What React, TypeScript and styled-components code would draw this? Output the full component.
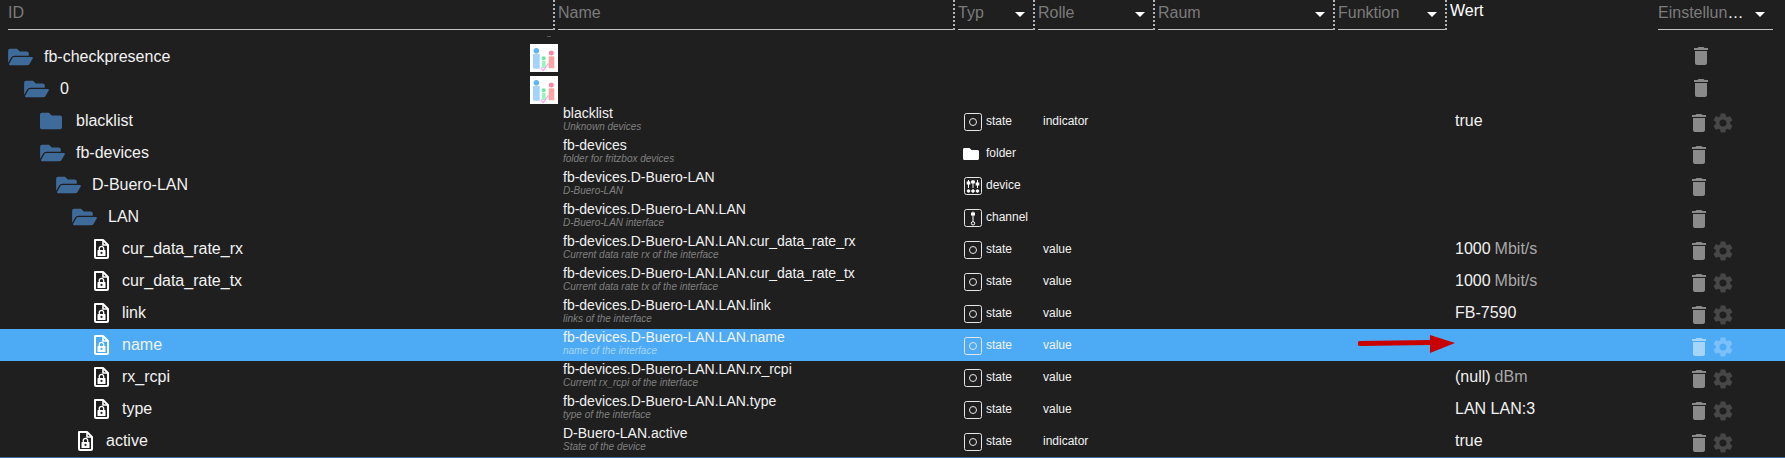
import React from "react";
import styled, { createGlobalStyle } from "styled-components";
import { FaFolder, FaFolderOpen } from "react-icons/fa";

const BG = "#1f1f1f";
const COLS = "555px 400px 80px 120px 180px 112px 208px 130px";

const Global = createGlobalStyle`
  html, body { margin: 0; padding: 0; background: ${BG}; overflow: hidden; }
  body { font-family: "Liberation Sans", Arial, sans-serif; color: #fff; }
`;

const Page = styled.div`
  position: relative;
  width: 1785px;
  height: 458px;
  overflow: hidden;
  background: ${BG};
`;

const HeaderRow = styled.div`
  display: grid;
  grid-template-columns: ${COLS};
  height: 41px;
`;

const HeaderCell = styled.div<{ $first?: boolean; $last?: boolean; $bare?: boolean }>`
  position: relative;
  box-sizing: border-box;
  height: 30px;
  padding-left: ${(p) => (p.$first ? 8 : 3)}px;
  padding-right: ${(p) => (p.$last ? 12 : 0)}px;
  border-right: ${(p) => (p.$last || p.$bare ? "0" : "2px dotted #b4b4b4")};
`;

const Grip = styled.span`
  position: absolute;
  right: 2px;
  top: 36px;
  width: 4px;
  height: 1px;
  background: #555;
`;

const Field = styled.div`
  box-sizing: border-box;
  display: flex;
  align-items: center;
  justify-content: space-between;
  height: 30px;
  padding: 0 8px 3px 0;
  border-bottom: 1px solid #c4c4c4;
  font-size: 16px;
  color: #7b7b7b;
`;

const Caret = styled.span`
  flex: none;
  width: 0;
  height: 0;
  margin-top: 3px;
  border-left: 5px solid transparent;
  border-right: 5px solid transparent;
  border-top: 5px solid #fff;
`;

const Ellipsis = styled.span`
  color: #fff;
`;

const WertLabel = styled.div`
  font-size: 16px;
  line-height: 21px;
  color: #fff;
`;

const TreeRow = styled.div<{ $selected?: boolean }>`
  display: grid;
  grid-template-columns: ${COLS};
  height: 32px;
  background: ${(p) => (p.$selected ? "#4dabf5" : "transparent")};
  color: #f2f2f2;
`;

const IdCell = styled.div<{ $level: number }>`
  display: flex;
  align-items: center;
  padding-left: ${(p) => 8 + p.$level * 16}px;
  font-size: 16px;
`;

const Slot = styled.span<{ $file?: boolean }>`
  flex: none;
  display: flex;
  align-items: center;
  box-sizing: border-box;
  width: ${(p) => (p.$file ? 34 : 36)}px;
  padding-left: ${(p) => (p.$file ? 6 : 0)}px;
`;

const OpenFolder = styled(FaFolderOpen)`
  width: 25px;
  height: 22px;
  color: #3f6b9b;
`;

const ClosedFolder = styled(FaFolder)`
  width: 22px;
  height: 22px;
  color: #3f6b9b;
`;

const Logo = styled.svg`
  flex: none;
  width: 28px;
  height: 28px;
  margin: 2px -3px 0 auto;
  background: #fff;
`;

const NameCell = styled.div`
  padding-left: 8px;
`;

const NameText = styled.div`
  font-size: 14px;
  line-height: 16px;
  white-space: nowrap;
`;

const NameSub = styled.div<{ $selected?: boolean }>`
  font-size: 10px;
  line-height: 11px;
  font-style: italic;
  white-space: nowrap;
  color: ${(p) => (p.$selected ? "#a6d5fa" : "#808080")};
`;

const TypeCell = styled.div`
  display: flex;
  align-items: center;
  padding-left: 9px;
  font-size: 12px;
`;

const TypeIcon = styled.svg`
  flex: none;
  width: 18px;
  height: 18px;
  margin: 2px 4px 0 0;
`;

const TypeFolder = styled(FaFolder)`
  flex: none;
  width: 16px;
  height: 16px;
  margin: 1px 7px 0 -1px;
  color: #fff;
`;

const RoleCell = styled.div`
  display: flex;
  align-items: center;
  padding: 0 0 1px 8px;
  font-size: 12px;
`;

const ValueCell = styled.div`
  display: flex;
  align-items: center;
  gap: 4px;
  padding: 0 0 1px 8px;
  font-size: 16px;
  grid-column: 7;
`;

const Unit = styled.span`
  color: #a8a8a8;
`;

const ActionCell = styled.div<{ $top?: boolean }>`
  display: flex;
  align-items: center;
  box-sizing: border-box;
  padding-left: ${(p) => (p.$top ? 34 : 32)}px;
  padding-top: ${(p) => (p.$top ? 0 : 4)}px;
  padding-bottom: ${(p) => (p.$top ? 2 : 0)}px;
`;

const ActionIcon = styled.svg<{ $tone: string }>`
  flex: none;
  width: 24px;
  height: 24px;
  fill: ${(p) => p.$tone};
`;

const BottomLine = styled.div`
  height: 1px;
  background: #3f6f9f;
`;

const Arrow = styled.svg`
  position: absolute;
  left: 1358px;
  top: 335px;
  width: 98px;
  height: 18px;
`;

const Spacer = styled.div``;

const AppLogo = () => (
  <Logo viewBox="0 0 28 28">
    <circle cx="6.3" cy="6.7" r="2.8" fill="#64b5f6" />
    <rect x="3" y="10" width="6.7" height="14.7" rx="0.6" fill="#a3d3fb" />
    <circle cx="13.7" cy="14.3" r="2" fill="#69eba0" />
    <rect x="12" y="17" width="3.7" height="7" fill="#98f5bd" />
    <circle cx="21.3" cy="9" r="2.5" fill="#ff86a8" />
    <rect x="18.7" y="12.3" width="5.6" height="12" rx="0.6" fill="#ffa4a4" />
    <path d="M11 23.7l2.3 3 5-7.4" fill="none" stroke="#f9a6f3" strokeWidth="1.2" />
  </Logo>
);

const FileLock = () => (
  <svg width="15" height="20" viewBox="0 0 15 20" style={{ display: "block" }}>
    <path d="M1 1h8l5 5v12a1 1 0 0 1-1 1H2a1 1 0 0 1-1-1Z" fill="none" stroke="#fff" strokeWidth="2" strokeLinejoin="round" />
    <path d="M9 1v5h5" fill="none" stroke="#fff" strokeWidth="1.6" />
    <path d="M5.3 11V9.6a2.2 2.2 0 0 1 4.4 0V11" fill="none" stroke="#fff" strokeWidth="1.3" />
    <path fillRule="evenodd" clipRule="evenodd" d="M4 11h7a.5.5 0 0 1 .5.5v5a.5.5 0 0 1-.5.5H4a.5.5 0 0 1-.5-.5v-5A.5.5 0 0 1 4 11Zm3.5 1.8a1.1 1.1 0 1 0 0 2.2 1.1 1.1 0 0 0 0-2.2Z" fill="#fff" />
  </svg>
);

const TypeGlyph = ({ type }: { type: string }) => {
  if (type === "folder") return <TypeFolder />;
  return (
    <TypeIcon viewBox="0 0 18 18" fill="none" stroke="#e6e6e6">
      <rect x="0.5" y="0.5" width="17" height="17" rx="2" />
      {type === "state" && <circle cx="9" cy="9" r="3.5" />}
      {type === "device" && (
        <g fill="#fff" stroke="#fff">
          <path d="M4.5 3v8M9 3v8M13.5 3v8" fill="none" />
          <rect x="3.2" y="5" width="2.6" height="2" />
          <rect x="7.7" y="4" width="2.6" height="2" />
          <rect x="12.2" y="6" width="2.6" height="2" />
          <circle cx="4.5" cy="14" r="1.3" />
          <circle cx="9" cy="14" r="1.3" />
          <circle cx="13.5" cy="14" r="1.3" />
        </g>
      )}
      {type === "channel" && (
        <g stroke="#fff">
          <path d="M9 2.5v10" />
          <rect x="7.5" y="4" width="3" height="2" fill="#fff" />
          <circle cx="9" cy="14.3" r="1.7" />
        </g>
      )}
    </TypeIcon>
  );
};

const TRASH = "M6 19c0 1.1.9 2 2 2h8c1.1 0 2-.9 2-2V7H6v12zM19 4h-3.5l-1-1h-5l-1 1H5v2h14V4z";
const GEAR =
  "M19.14 12.94c.04-.3.06-.61.06-.94 0-.32-.02-.64-.07-.94l2.03-1.58c.18-.14.23-.41.12-.61l-1.92-3.32c-.12-.22-.37-.29-.59-.22l-2.39.96c-.5-.38-1.03-.7-1.62-.94l-.36-2.54c-.04-.24-.24-.41-.48-.41h-3.84c-.24 0-.43.17-.47.41l-.36 2.54c-.59.24-1.13.57-1.62.94l-2.39-.96c-.22-.08-.47 0-.59.22L2.74 8.87c-.12.21-.08.47.12.61l2.03 1.58c-.05.3-.09.63-.09.94s.02.64.07.94l-2.03 1.58c-.18.14-.23.41-.12.61l1.92 3.32c.12.22.37.29.59.22l2.39-.96c.5.38 1.03.7 1.62.94l.36 2.54c.05.24.24.41.48.41h3.84c.24 0 .44-.17.47-.41l.36-2.54c.59-.24 1.13-.56 1.62-.94l2.39.96c.22.08.47 0 .59-.22l1.92-3.32c.12-.22.07-.47-.12-.61l-2.01-1.58zM12 15.6c-1.98 0-3.6-1.62-3.6-3.6s1.62-3.6 3.6-3.6 3.6 1.62 3.6 3.6-1.62 3.6-3.6 3.6z";

type Row = {
  level: number;
  id: string;
  icon: "open" | "closed" | "file";
  logo?: boolean;
  name?: string;
  sub?: string;
  type?: string;
  role?: string;
  value?: string;
  unit?: string;
  gear?: boolean;
  selected?: boolean;
};

const B = "fb-devices.D-Buero-LAN.LAN";
const rows: Row[] = [
  { level: 0, id: "fb-checkpresence", icon: "open", logo: true },
  { level: 1, id: "0", icon: "open", logo: true },
  { level: 2, id: "blacklist", icon: "closed", name: "blacklist", sub: "Unknown devices", type: "state", role: "indicator", value: "true", gear: true },
  { level: 2, id: "fb-devices", icon: "open", name: "fb-devices", sub: "folder for fritzbox devices", type: "folder" },
  { level: 3, id: "D-Buero-LAN", icon: "open", name: "fb-devices.D-Buero-LAN", sub: "D-Buero-LAN", type: "device" },
  { level: 4, id: "LAN", icon: "open", name: B, sub: "D-Buero-LAN interface", type: "channel" },
  { level: 5, id: "cur_data_rate_rx", icon: "file", name: `${B}.cur_data_rate_rx`, sub: "Current data rate rx of the interface", type: "state", role: "value", value: "1000", unit: "Mbit/s", gear: true },
  { level: 5, id: "cur_data_rate_tx", icon: "file", name: `${B}.cur_data_rate_tx`, sub: "Current data rate tx of the interface", type: "state", role: "value", value: "1000", unit: "Mbit/s", gear: true },
  { level: 5, id: "link", icon: "file", name: `${B}.link`, sub: "links of the interface", type: "state", role: "value", value: "FB-7590", gear: true },
  { level: 5, id: "name", icon: "file", name: `${B}.name`, sub: "name of the interface", type: "state", role: "value", gear: true, selected: true },
  { level: 5, id: "rx_rcpi", icon: "file", name: `${B}.rx_rcpi`, sub: "Current rx_rcpi of the interface", type: "state", role: "value", value: "(null)", unit: "dBm", gear: true },
  { level: 5, id: "type", icon: "file", name: `${B}.type`, sub: "type of the interface", type: "state", role: "value", value: "LAN LAN:3", gear: true },
  { level: 4, id: "active", icon: "file", name: "D-Buero-LAN.active", sub: "State of the device", type: "state", role: "indicator", value: "true", gear: true },
];

const headers = ["Typ", "Rolle", "Raum", "Funktion"];

export default function App() {
  return (
    <Page>
      <Global />
      <HeaderRow>
        <HeaderCell $first>
          <Field>ID</Field>
          <Grip />
        </HeaderCell>
        <HeaderCell>
          <Field>Name</Field>
        </HeaderCell>
        {headers.map((h) => (
          <HeaderCell key={h}>
            <Field>
              {h}
              <Caret />
            </Field>
          </HeaderCell>
        ))}
        <HeaderCell $bare>
          <WertLabel>Wert</WertLabel>
        </HeaderCell>
        <HeaderCell $last>
          <Field>
            <span>
              Einstellun<Ellipsis>…</Ellipsis>
            </span>
            <Caret />
          </Field>
        </HeaderCell>
      </HeaderRow>
      {rows.map((r) => (
        <TreeRow key={r.name ?? r.id} $selected={r.selected}>
          <IdCell $level={r.level}>
            <Slot $file={r.icon === "file"}>
              {r.icon === "open" && <OpenFolder />}
              {r.icon === "closed" && <ClosedFolder />}
              {r.icon === "file" && <FileLock />}
            </Slot>
            {r.id}
            {r.logo && <AppLogo />}
          </IdCell>
          <NameCell>
            {r.name && <NameText>{r.name}</NameText>}
            {r.sub && <NameSub $selected={r.selected}>{r.sub}</NameSub>}
          </NameCell>
          <TypeCell>
            {r.type && <TypeGlyph type={r.type} />}
            {r.type}
          </TypeCell>
          <RoleCell>{r.role}</RoleCell>
          <Spacer />
          <Spacer />
          <ValueCell>
            {r.value}
            {r.unit && <Unit>{r.unit}</Unit>}
          </ValueCell>
          <ActionCell $top={!r.name}>
            <ActionIcon viewBox="0 0 24 24" $tone={r.selected ? "#a6d5fa" : "#8a8a8a"}>
              <path d={TRASH} />
            </ActionIcon>
            {r.gear && (
              <ActionIcon viewBox="0 0 24 24" $tone={r.selected ? "#7bc0f8" : "#474747"}>
                <path d={GEAR} />
              </ActionIcon>
            )}
          </ActionCell>
        </TreeRow>
      ))}
      <BottomLine />
      <Arrow viewBox="0 0 98 18">
        <path d="M2 8.5 L72 7.5" stroke="#c90000" strokeWidth="5" strokeLinecap="round" fill="none" />
        <path d="M72 0 L97 8 L72 18 Z" fill="#c90000" />
      </Arrow>
    </Page>
  );
}
